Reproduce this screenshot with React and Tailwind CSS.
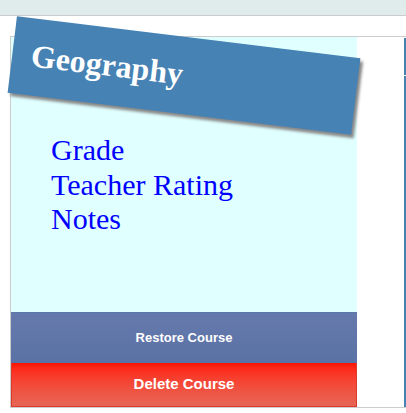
export default function App() {
  return (
    <div className="w-[406px] h-[413px] bg-white overflow-hidden" style={{ fontFamily: '"Liberation Serif", "Times New Roman", serif' }}>
      <div className="h-[16px] bg-[#e0ebeb] border-b border-[#cccccc]" />
      <div className="mt-[20px] ml-[10px] w-[396px] h-[372px] border-t border-l border-b border-[#cccccc] flex">
        <div className="w-[346px] h-[370px] bg-[#e0ffff] flex flex-col">
          <div className="h-[77px] bg-[#4682b4] rotate-[7deg] shadow-[3px_3px_3px_#888888] pt-[19px] pl-[19px]">
            <div className="text-[32px] font-bold text-white leading-[1.15]">Geography</div>
          </div>
          <div className="mt-[19px] pl-[40px] flex flex-col text-[30px] leading-[1.15] text-[#0000ff]">
            <span>Grade</span>
            <span>Teacher Rating</span>
            <span>Notes</span>
          </div>
          <div className="mt-auto flex flex-col" style={{ fontFamily: '"Liberation Sans", Arial, sans-serif' }}>
            <div className="h-[51px] border-t border-[#5a78ae] bg-gradient-to-b from-[#6679ad] to-[#5a72a5] flex items-center justify-center text-white font-bold text-[13px]">
              Restore Course
            </div>
            <div className="h-[44px] border-x border-b border-[#dc3a2c] bg-gradient-to-b from-[#ff1200] to-[#e66556] flex items-center justify-center text-white font-bold text-[15px]">
              Delete Course
            </div>
          </div>
        </div>
        <div className="w-[47px]" />
        <div className="w-[2px] flex flex-col pt-[1px]">
          <div className="h-[37px] bg-[#4682b4]" />
          <div className="h-[1px] bg-white" />
          <div className="flex-1 bg-[#4682b4]" />
        </div>
      </div>
    </div>
  );
}
